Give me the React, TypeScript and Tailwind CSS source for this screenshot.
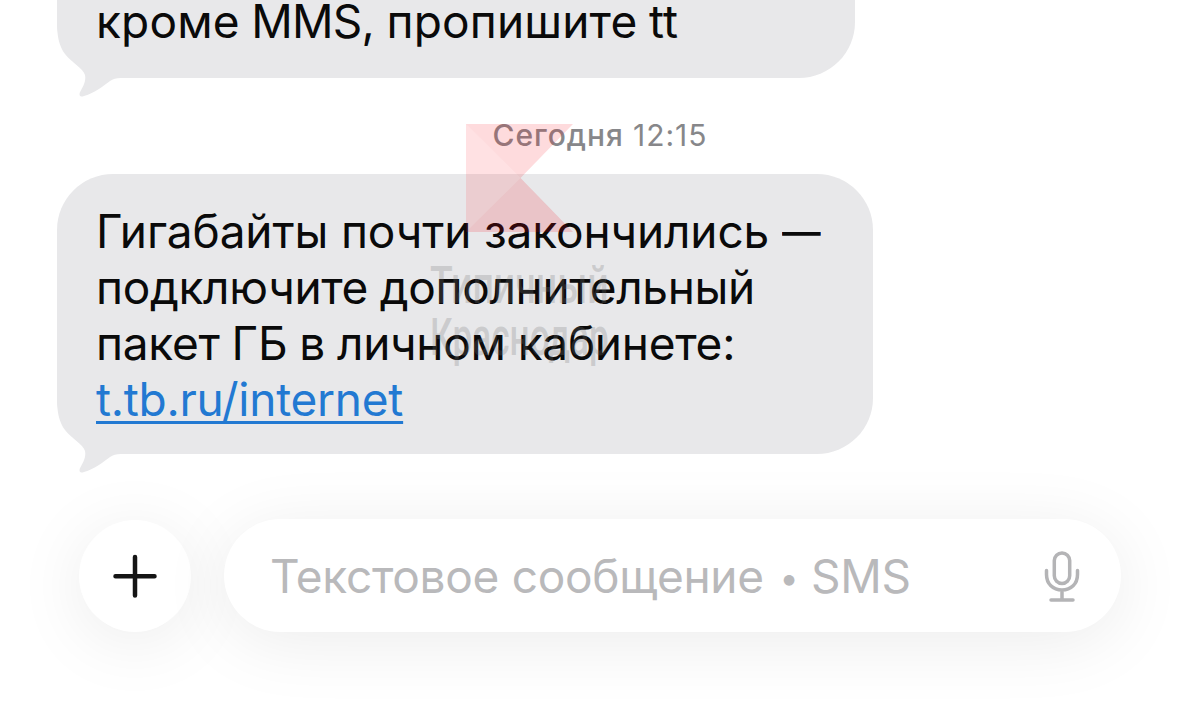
import type { ReactNode } from "react";

const Tail = () => (
  <svg
    className="absolute -bottom-[19px] left-0 -z-10 h-[75px] w-[64px]"
    viewBox="0 0 64 75"
    fill="#e8e8ea"
  >
    <path d="M0 0C0 14 2 24 8 32C15 41 26 46 28 53C29.500 60 25 66 22.700 71C22 74 23.500 75.500 27 74C38 71 46 64 53 59Q57 56 64 56V0Z" />
  </svg>
);

const Bubble = ({ className, children }: { className: string; children: ReactNode }) => (
  <div
    className={`relative isolate ml-[57px] bg-[#e8e8ea] pl-[39px] text-[46px] leading-[56px] whitespace-nowrap text-[#0a0a0a] ${className}`}
  >
    {children}
    <Tail />
  </div>
);

const Watermark = () => (
  <div className="pointer-events-none absolute top-[124px] left-[430px] w-[180px]">
    <svg className="ml-[36px] h-[108px] w-[107px]" viewBox="0 0 107 108">
      <path d="M0 0H107L54.500 54L107 108H0Z" fill="#ff1020" fillOpacity="0.125" />
      <path d="M0 0L54.500 54L107 0Z" fill="#d00010" fillOpacity="0.025" />
      <path d="M0 108L54.500 54L107 108Z" fill="#e00010" fillOpacity="0.045" />
    </svg>
    <div className="mt-[28px] font-['Roboto',sans-serif] text-[51px] leading-[52px] font-medium whitespace-nowrap text-[#777777]/25">
      <p className="origin-left scale-x-[0.735]">Типичный</p>
      <p className="origin-left scale-x-[0.69]">Краснодар</p>
    </div>
  </div>
);

const Composer = () => (
  <div className="mt-[65px] ml-[79px] flex items-end gap-[33px]">
    <button className="flex size-[112px] items-center justify-center rounded-full bg-white shadow-[0_10px_70px_rgba(0,0,0,0.08)]">
      <svg className="size-[44px]" viewBox="0 0 44 44" stroke="#151515" strokeWidth="4.500" strokeLinecap="round">
        <path d="M22 3V41.500M2.500 22.300H41.500" />
      </svg>
    </button>
    <div className="z-10 flex h-[113px] w-[897px] items-center justify-between rounded-full bg-white pt-[2px] pr-[41px] pl-[46px] shadow-[0_10px_70px_rgba(0,0,0,0.08)]">
      <span className="text-[46px] tracking-[-0.3px] whitespace-nowrap text-[#b9b9bb]">
        Текстовое сообщение{" "}
        <span className="inline-block w-[22px] pl-[3px] align-[3px] text-[34px] leading-none">•</span> SMS
      </span>
      <svg
        className="h-[52px] w-[36px] shrink-0"
        viewBox="0 0 36 52"
        fill="none"
        stroke="#b4b4b6"
        strokeWidth="3.500"
        strokeLinecap="round"
      >
        <rect x="10.300" y="1.900" width="15.400" height="30.500" rx="7.700" />
        <path d="M2.500 19.500V23.500C2.500 33 9 39 18 39S33.500 33 33.500 23.500V19.500M18 39V48M7 49H29" />
      </svg>
    </div>
  </div>
);

export default function App() {
  return (
    <main className="relative h-[711px] w-[1200px] overflow-hidden bg-white font-['Inter',sans-serif]">
      <Bubble className="flex h-[78px] w-[798px] items-end rounded-b-[56px] pb-[29px]">
        <p className="tracking-[0.15px] [word-spacing:-1.500px]">
          кроме <span className="tracking-[-0.8px]">MMS</span>, пропишите tt
        </p>
      </Bubble>

      <p className="mt-[38px] ml-[492.5px] h-[58px] text-[30px] leading-[38px] tracking-[0.95px] whitespace-nowrap text-[#87878a]">
        <span className="font-medium">Сегодня</span> 12:15
      </p>

      <Bubble className="h-[280px] w-[816px] rounded-[56px] pt-[29px]">
        <p className="tracking-[-0.14px]">
          Гигабайты почти закончились <span className="inline-block origin-left scale-x-[0.84]">—</span>
        </p>
        <p className="tracking-[-0.33px] [word-spacing:-1px]">подключите дополнительный</p>
        <p className="tracking-[-0.28px] [word-spacing:-0.7px]">пакет ГБ в личном кабинете:</p>
        <p className="tracking-[-0.25px]">
          <a href="#" className="text-[#2279d2] underline decoration-[3px] underline-offset-[5px]">
            t.tb.ru/internet
          </a>
        </p>
      </Bubble>

      <Composer />
      <Watermark />
    </main>
  );
}
